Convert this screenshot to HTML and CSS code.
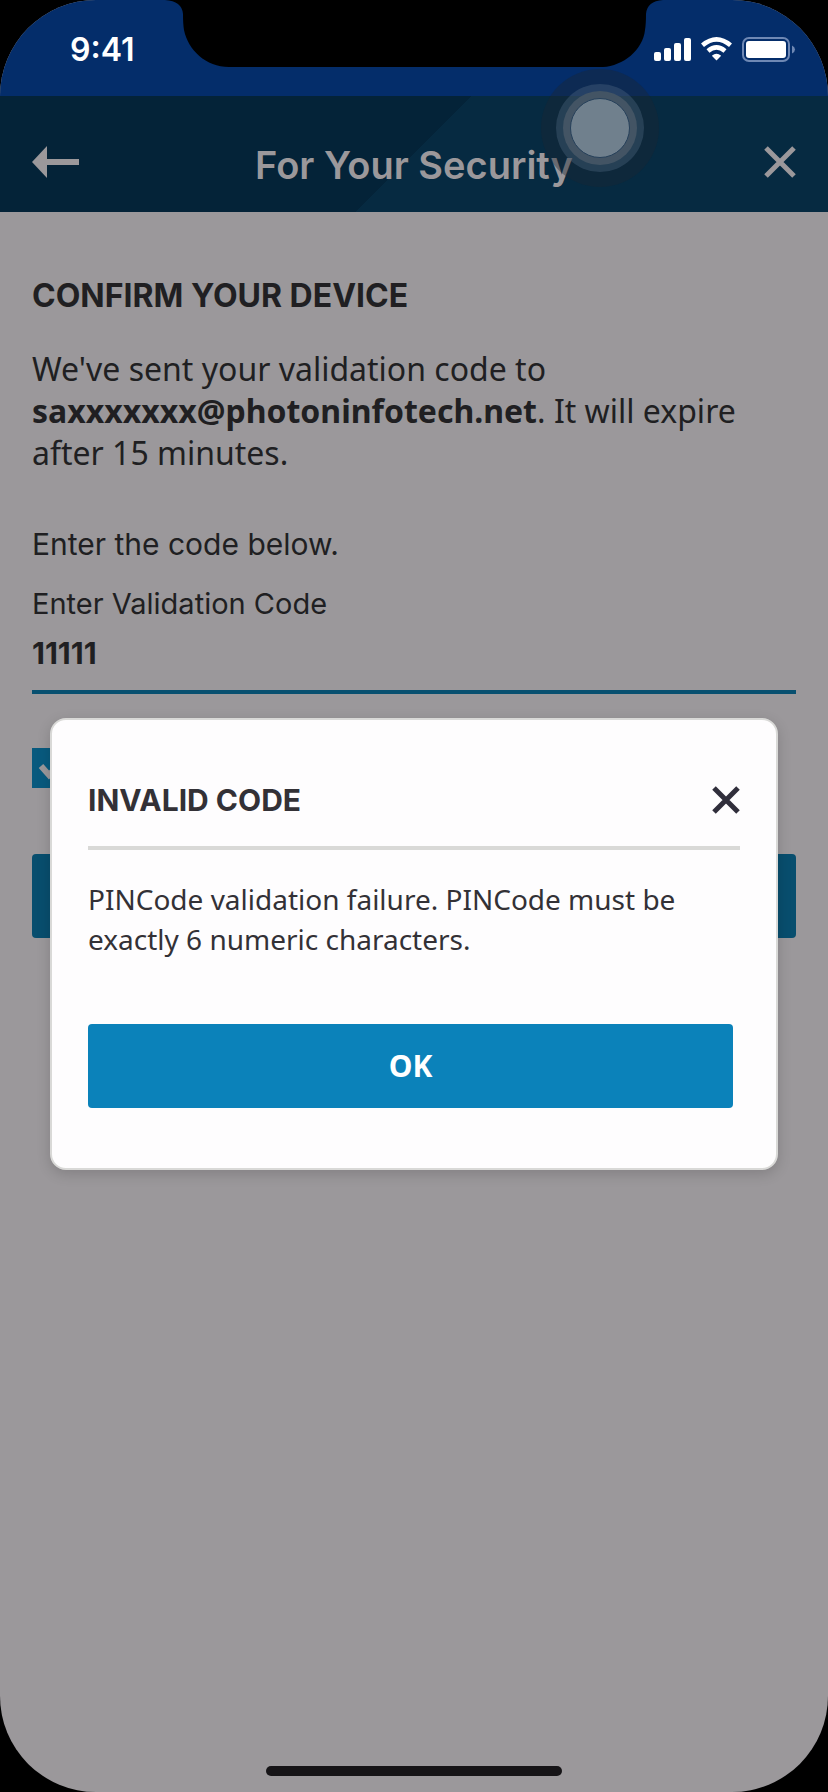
FILE: index.html
```html
<!DOCTYPE html>
<html lang="en">
<head>
<meta charset="utf-8">
<meta name="viewport" content="width=device-width, initial-scale=1">
<title>For Your Security</title>
<link rel="stylesheet" href="styles.css">
</head>
<body>
<div class="phone">
  <div class="status-bar">
    <span class="time">9:41</span>
    <svg class="notch" width="498" height="67" viewBox="0 0 498 67" aria-hidden="true"><path fill="#000" d="M0 0Q17 1 18 14Q18 24 19 30C23 50 41 67 64 67H438C458 66 478 50 480 30Q481 24 481 14Q482 1 498 0Z"/></svg>
    <svg class="status-icons" width="142" height="26" viewBox="0 0 142 26" aria-hidden="true">
      <g fill="#fff">
        <rect x="0" y="15" width="7" height="9" rx="2"/>
        <rect x="10" y="11" width="7" height="13" rx="2"/>
        <rect x="20" y="6" width="7" height="18" rx="2"/>
        <rect x="30" y="1" width="7" height="23" rx="2"/>
        <path d="M62.500 23.500L57.800 18.800Q62.500 14.800 67.200 18.800Z"/>
      </g>
      <path d="M48.500 8.300Q62.500-3.500 76.500 8.300M54 14Q62.500 6.900 71 14" fill="none" stroke="#fff" stroke-width="4.600"/>
      <rect x="89" y="1" width="46" height="23" rx="6" fill="none" stroke="#6f88b4" stroke-width="2"/>
      <rect x="92" y="4" width="40" height="17" rx="3" fill="#fff"/>
      <path d="M138 8.500Q141 10 141 12.500T138 16.500Z" fill="#6f88b4"/>
    </svg>
  </div>

  <header class="header">
    <button class="icon-button" aria-label="Back">
      <svg width="48" height="32" viewBox="0 0 48 32"><path fill="currentColor" d="M0 16L15 0V13H47V19H15V32Z"/></svg>
    </button>
    <h1 class="title">For Your Security</h1>
    <button class="icon-button header-close" aria-label="Close">
      <svg width="32" height="32" viewBox="0 0 32 32"><path d="M2 2L30 30M30 2L2 30" stroke="currentColor" stroke-width="5"/></svg>
    </button>
  </header>

  <main class="content">
    <h2 class="heading">CONFIRM YOUR DEVICE</h2>
    <p class="intro">We've sent your validation code to <strong>saxxxxxxx@photoninfotech.net</strong>. It will expire after 15 minutes.</p>
    <p class="prompt">Enter the code below.</p>
    <label class="field-label" for="code">Enter Validation Code</label>
    <input class="field" id="code" type="text" inputmode="numeric" value="11111">
    <label class="check">
      <input class="check-box" type="checkbox" aria-label="Remember this device" checked>
      <svg class="check-mark" width="40" height="40" viewBox="0 0 40 40"><path d="M9 18L17 27L31 12" fill="none" stroke="currentColor" stroke-width="6"/></svg>
    </label>
    <button class="submit" aria-label="Continue"></button>
  </main>

  <div class="home-bar"></div>

  <div class="overlay">
    <section class="dialog" role="dialog" aria-modal="true" aria-labelledby="dialog-title">
      <div class="dialog-head">
        <h2 class="dialog-title" id="dialog-title">INVALID CODE</h2>
        <button class="icon-button dialog-close" aria-label="Close message">
          <svg width="28" height="28" viewBox="0 0 28 28"><path d="M2 2L26 26M26 2L2 26" stroke="currentColor" stroke-width="5"/></svg>
        </button>
      </div>
      <p class="dialog-text">PINCode validation failure. PINCode must be exactly 6 numeric characters.</p>
      <button class="ok">OK</button>
    </section>
  </div>

  <div class="touch" aria-hidden="true"><div class="touch-halo"><div class="touch-ring"><div class="touch-core"></div></div></div></div>
</div>
</body>
</html>
```
FILE: styles.css
```css
* { box-sizing: border-box; }

body {
  margin: 0;
  background: #000;
  color: #201f22;
  font-family: "Noto Sans", sans-serif;
}

h1, h2, p { margin: 0; }

button {
  padding: 0;
  border: 0;
  font: inherit;
}

svg { display: block; }

.phone {
  position: relative;
  display: flex;
  flex-direction: column;
  min-height: 100vh;
  overflow: hidden;
  border-radius: 96px;
  background: #9b989b;
}

.status-bar {
  display: grid;
  grid-template-columns: minmax(0, 1fr) 498px minmax(0, 1fr);
  height: 96px;
  background: #042d6a;
}

.time {
  padding: 30px 0 0 70px;
  color: #fff;
  font: 600 32px/40px Inter, sans-serif;
}

.status-icons {
  justify-self: end;
  margin: 37px 32px 0 0;
}

.header {
  display: flex;
  align-items: center;
  justify-content: space-between;
  height: 116px;
  padding: 16px 32px 0;
  background: linear-gradient(135deg, #042338 50%, #062a41 50%);
  color: #9b989b;
}

.icon-button {
  display: flex;
  background: none;
  color: inherit;
}

.header-close {
  justify-content: flex-end;
  width: 48px;
}

.title {
  padding-top: 6px;
  font: 600 38px/48px Inter, sans-serif;
}

.content {
  display: flex;
  flex-direction: column;
  flex: 1;
  padding: 64px 32px;
}

.heading {
  font: 700 32px/40px Inter, sans-serif;
}

.intro {
  margin-top: 32px;
  font-size: 32px;
  line-height: 42px;
}

.prompt {
  margin-top: 48px;
  font: 400 30px/44px Inter, sans-serif;
}

.field-label {
  margin-top: 16px;
  font: 400 29px/44px Inter, sans-serif;
}

.field {
  height: 68px;
  padding: 0 0 10px;
  border: 0;
  border-bottom: 4px solid #085070;
  border-radius: 0;
  outline: 0;
  background: none;
  color: inherit;
  font: 700 30px/40px Inter, sans-serif;
}

.check {
  display: grid;
  width: 40px;
  height: 40px;
  margin-top: 54px;
  color: #9b989b;
}

.check-box {
  grid-area: 1 / 1;
  width: 40px;
  height: 40px;
  margin: 0;
  appearance: none;
  background: #085a7e;
}

.check-mark { grid-area: 1 / 1; }

.submit {
  height: 84px;
  margin-top: 66px;
  border-radius: 4px;
  background: #084e6e;
}

.home-bar {
  align-self: center;
  width: 296px;
  height: 10px;
  margin-bottom: 16px;
  border-radius: 5px;
  background: #161417;
}

.overlay {
  position: absolute;
  inset: 0;
  padding: 718px 50px 0;
}

.dialog {
  padding: 60px 36px 60px;
  border: 2px solid #d9d9d7;
  border-radius: 16px;
  background: #fefdfe;
  box-shadow: 0 4px 14px rgba(0, 0, 0, 0.16);
  color: #333136;
}

.dialog-head {
  display: flex;
  align-items: center;
  justify-content: space-between;
  height: 70px;
  padding-bottom: 26px;
  border-bottom: 4px solid #d9d9d7;
}

.dialog-title {
  font: 700 30px/40px Inter, sans-serif;
}

.dialog-close { color: #302e3b; }

.dialog-text {
  margin-top: 29px;
  font-size: 28px;
  line-height: 40px;
}

.ok {
  display: block;
  width: calc(100% - 7px);
  height: 84px;
  margin-top: 65px;
  border-radius: 4px;
  background: #0b82ba;
  color: #fff;
  font: 700 30px/40px "Noto Sans", sans-serif;
}

.touch,
.touch-halo,
.touch-ring {
  display: grid;
  place-items: center;
  border-radius: 50%;
}

.touch {
  position: absolute;
  top: 69px;
  right: 169px;
  width: 118px;
  height: 118px;
  background: rgba(28, 38, 50, 0.4);
}

.touch-halo {
  width: 88px;
  height: 88px;
  background: rgba(82, 107, 134, 0.36);
}

.touch-ring {
  width: 74px;
  height: 74px;
  background: #435464;
}

.touch-core {
  width: 60px;
  height: 60px;
  border: 1px solid #26405a;
  border-radius: 50%;
  background: #70808d;
}
```
